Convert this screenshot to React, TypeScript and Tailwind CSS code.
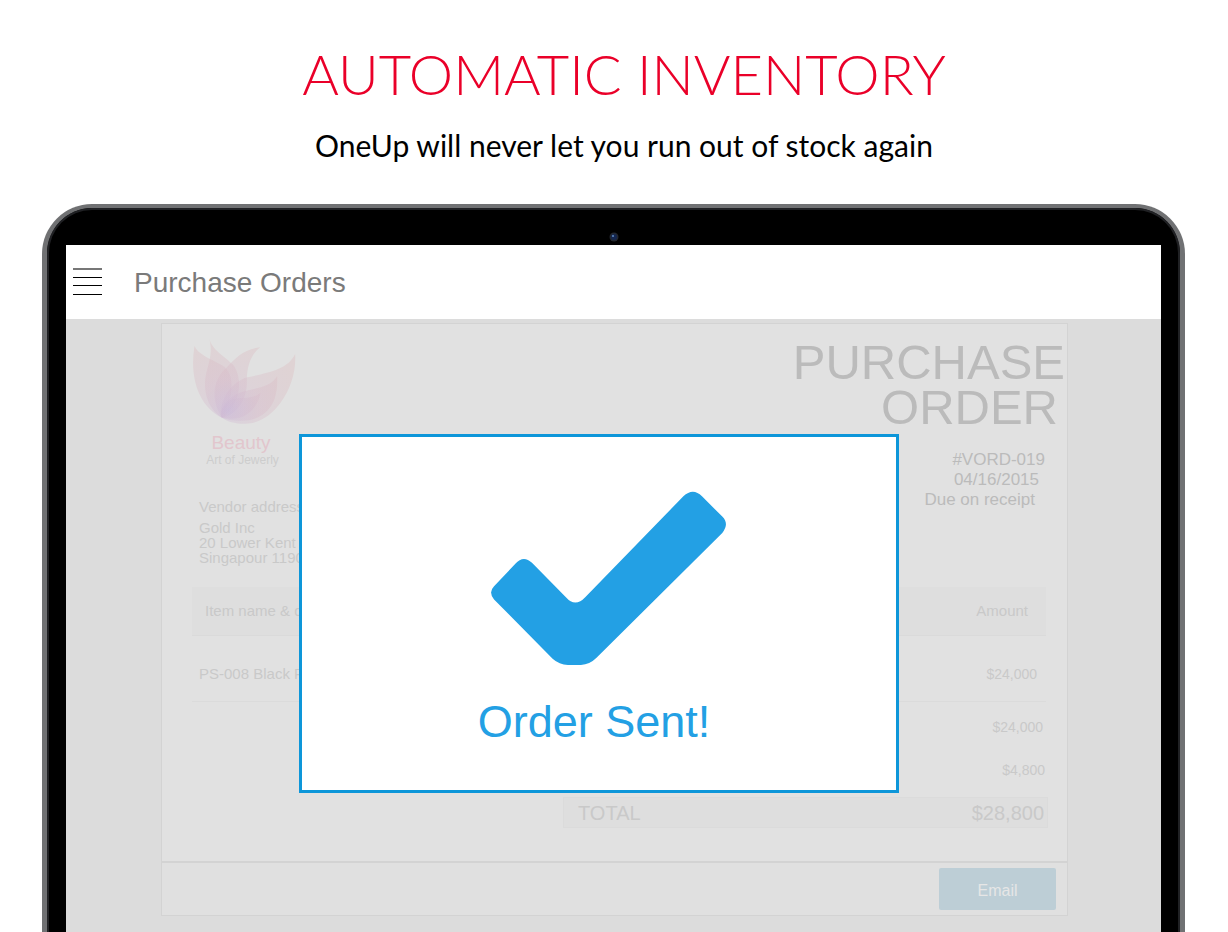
import React from "react";

const petals = [
  "M103 80 C112 104 150 118 186 138 C222 160 226 222 185 295 C112 258 88 170 103 80Z",
  "M147 56 C154 92 196 112 220 138 C248 178 244 250 187 296 C140 268 126 208 139 158 C148 125 158 95 147 56Z",
  "M300 84 C252 88 225 116 198 146 C158 180 150 246 187 296 C240 282 262 226 260 185 C260 140 272 106 300 84Z",
  "M405 104 C382 152 322 160 262 174 C216 186 178 240 182 292 C200 308 230 314 256 313 C300 312 335 286 360 252 C392 208 408 156 405 104Z",
  "M351 170 C330 208 276 206 238 220 C204 234 178 264 183 293 C200 304 236 306 266 303 C306 296 334 268 344 236 C351 214 352 192 351 170Z",
  "M301 220 C276 242 240 232 216 240 C192 250 178 274 183 293 C200 300 232 300 252 290 C280 274 296 250 301 220Z",
];

function LotusLogo() {
  return (
    <svg viewBox="90 50 320 270" className="h-[90px] w-[107px]" role="img" aria-label="Beauty logo">
      <defs>
        <radialGradient id="petal" gradientUnits="userSpaceOnUse" cx="205" cy="275" r="220">
          <stop offset="0" stopColor="#cdbad8" />
          <stop offset="0.4" stopColor="#d7bccb" />
          <stop offset="1" stopColor="#dcbcbf" />
        </radialGradient>
      </defs>
      {petals.map((d) => (
        <path key={d} d={d} fill="url(#petal)" opacity="0.38" />
      ))}
    </svg>
  );
}

function CheckMark() {
  return (
    <svg viewBox="30 34 712 526" className="h-[175px] w-[237px]" fill="#23a0e4" aria-hidden="true">
      <path d="M42 320 L106 253 Q130 225 156 250 L258 353 Q286 385 316 353 L611 50 Q640 22 667 50 L728 111 Q750 133 728 160 L350 535 Q330 555 303 557 H264 Q238 556 218 538 L42 360 Q24 338 42 320Z" />
    </svg>
  );
}

function MenuButton() {
  return (
    <button type="button" aria-label="Menu" className="h-[30px] w-[29px]">
      <svg viewBox="0 0 29 30" className="h-[30px] w-[29px]" shapeRendering="crispEdges">
        <rect y="1" width="29" height="2" fill="#777" />
        <rect y="10" width="29" height="1" fill="#000" />
        <rect y="18" width="29" height="1" fill="#000" />
        <rect y="27" width="29" height="1" fill="#000" />
      </svg>
    </button>
  );
}

function OrderDocument() {
  return (
    <article className="ml-[95px] mr-[93px] border border-[#d3d3d3] bg-[#e1e1e1] text-[#c9c9c9]">
      <div className="flex h-[263px] justify-between">
        <div className="pl-[28px] pt-[12px]">
          <LotusLogo />
          <div className="mt-[7px] w-[102px] text-center">
            <p className="text-[19px] leading-[20px] text-[#e2c6cd]">Beauty</p>
            <p className="whitespace-nowrap pl-[3px] text-[12px] leading-[15px] text-[#cdcdcd]">Art of Jewerly</p>
          </div>
          <div className="mt-[31px] whitespace-nowrap pl-[9px] text-[15px] leading-[15px]">
            <p>Vendor address</p>
            <address className="mt-[6px] not-italic">
              Gold Inc
              <br />
              20 Lower Kent
              <br />
              Singapour 1190
            </address>
          </div>
        </div>
        <div className="flex flex-col items-end pt-[16px] text-[#bbbbbb]">
          <h2 className="flex flex-col items-end text-[49px] leading-[45px]">
            <span className="pr-[2px]">PURCHASE</span>
            <span className="pr-[9px]">ORDER</span>
          </h2>
          <div className="mt-[20px] flex flex-col items-end text-[17px] leading-[20px]">
            <p className="pr-[22px]">#VORD-019</p>
            <p className="pr-[28px]">04/16/2015</p>
            <p className="pr-[32px]">Due on receipt</p>
          </div>
        </div>
      </div>

      <div className="ml-[30px] mr-[21px]">
        <table className="w-full border-collapse text-[15px] leading-[20px]">
          <thead>
            <tr className="h-[48px] border-b border-[#dadada] bg-[#dedede]">
              <th className="pl-[13px] text-left font-normal">Item name &amp; description</th>
              <th className="pr-[18px] text-right font-normal">Amount</th>
            </tr>
          </thead>
          <tbody>
            <tr className="h-[66px] border-b border-[#dbdbdb]">
              <td className="pl-[7px] pt-[12px]">PS-008 Black Pearl</td>
              <td className="pr-[9px] pt-[12px] text-right text-[14px]">$24,000</td>
            </tr>
          </tbody>
        </table>
        <div className="mt-[15px] flex flex-col items-end text-[14px] leading-[20px]">
          <p className="pr-[3px]">$24,000</p>
          <p className="mt-[23px] pr-[1px]">$4,800</p>
        </div>
        <div className="-mr-[2px] ml-auto mt-[17px] flex h-[31px] w-[485px] items-center justify-between border border-[#dbdbdb] bg-[#dedede] pl-[14px] pr-[3px] pt-[2px] text-[20px]">
          <span>TOTAL</span>
          <span>$28,800</span>
        </div>
      </div>

      <footer className="mt-[33px] flex h-[54px] items-center justify-end border-t-2 border-[#d3d3d3] bg-[#e0e0e0] pr-[11px]">
        <button type="button" className="h-[42px] w-[117px] rounded-[2px] bg-[#bdced6] pt-[4px] text-[16px] text-[#e6e6e6]">
          Email
        </button>
      </footer>
    </article>
  );
}

function SentDialog() {
  return (
    <div
      role="dialog"
      aria-labelledby="sent-title"
      className="absolute left-[233px] right-[262px] top-[115px] flex h-[359px] flex-col items-center border-[3px] border-[#0d96d9] bg-white pt-[54px] text-[#23a0e4]"
    >
      <div className="pl-[18px]">
        <CheckMark />
      </div>
      <p id="sent-title" className="mt-[31px] pr-[10px] text-[45px] leading-[50px]">
        Order Sent!
      </p>
    </div>
  );
}

export default function App() {
  return (
    <main className="flex min-h-screen flex-col bg-white font-['Liberation_Sans',Arial,sans-serif]">
      <header className="flex flex-col items-center pb-[38px] pl-[20px] pt-[39px] text-center font-['Lato',sans-serif]">
        <h1 className="text-[56px] font-light leading-[70px] text-[#ea0029]">AUTOMATIC INVENTORY</h1>
        <p className="mt-[15px] text-[30px] leading-[42px] text-black">OneUp will never let you run out of stock again</p>
      </header>

      <section className="ml-[42px] mr-[43px] flex flex-1 flex-col rounded-t-[50px] border-x-[5px] border-t-[4px] border-[#707173] bg-black">
        <div className="flex flex-1 flex-col rounded-t-[45px] border-x-2 border-t-2 border-[#202124] px-[17px]">
          <div className="flex h-[35px] items-center justify-center pt-[18px]">
            <svg viewBox="0 0 10 10" className="h-[10px] w-[10px]" aria-hidden="true">
              <circle cx="5" cy="5" r="4.5" fill="#23272f" />
              <circle cx="5" cy="5" r="3" fill="#14264f" />
              <circle cx="4" cy="4" r="1.1" fill="#5d86bd" />
            </svg>
          </div>
          <div className="flex flex-1 flex-col bg-[#dcdcdc]">
            <div className="flex h-[74px] items-center gap-[32px] bg-white pl-[7px]">
              <MenuButton />
              <h2 className="pt-[2px] text-[28px] leading-[32px] text-[#7a7a7a]">Purchase Orders</h2>
            </div>
            <div className="relative pb-[17px] pt-[4px]">
              <OrderDocument />
              <SentDialog />
            </div>
          </div>
        </div>
      </section>
    </main>
  );
}
